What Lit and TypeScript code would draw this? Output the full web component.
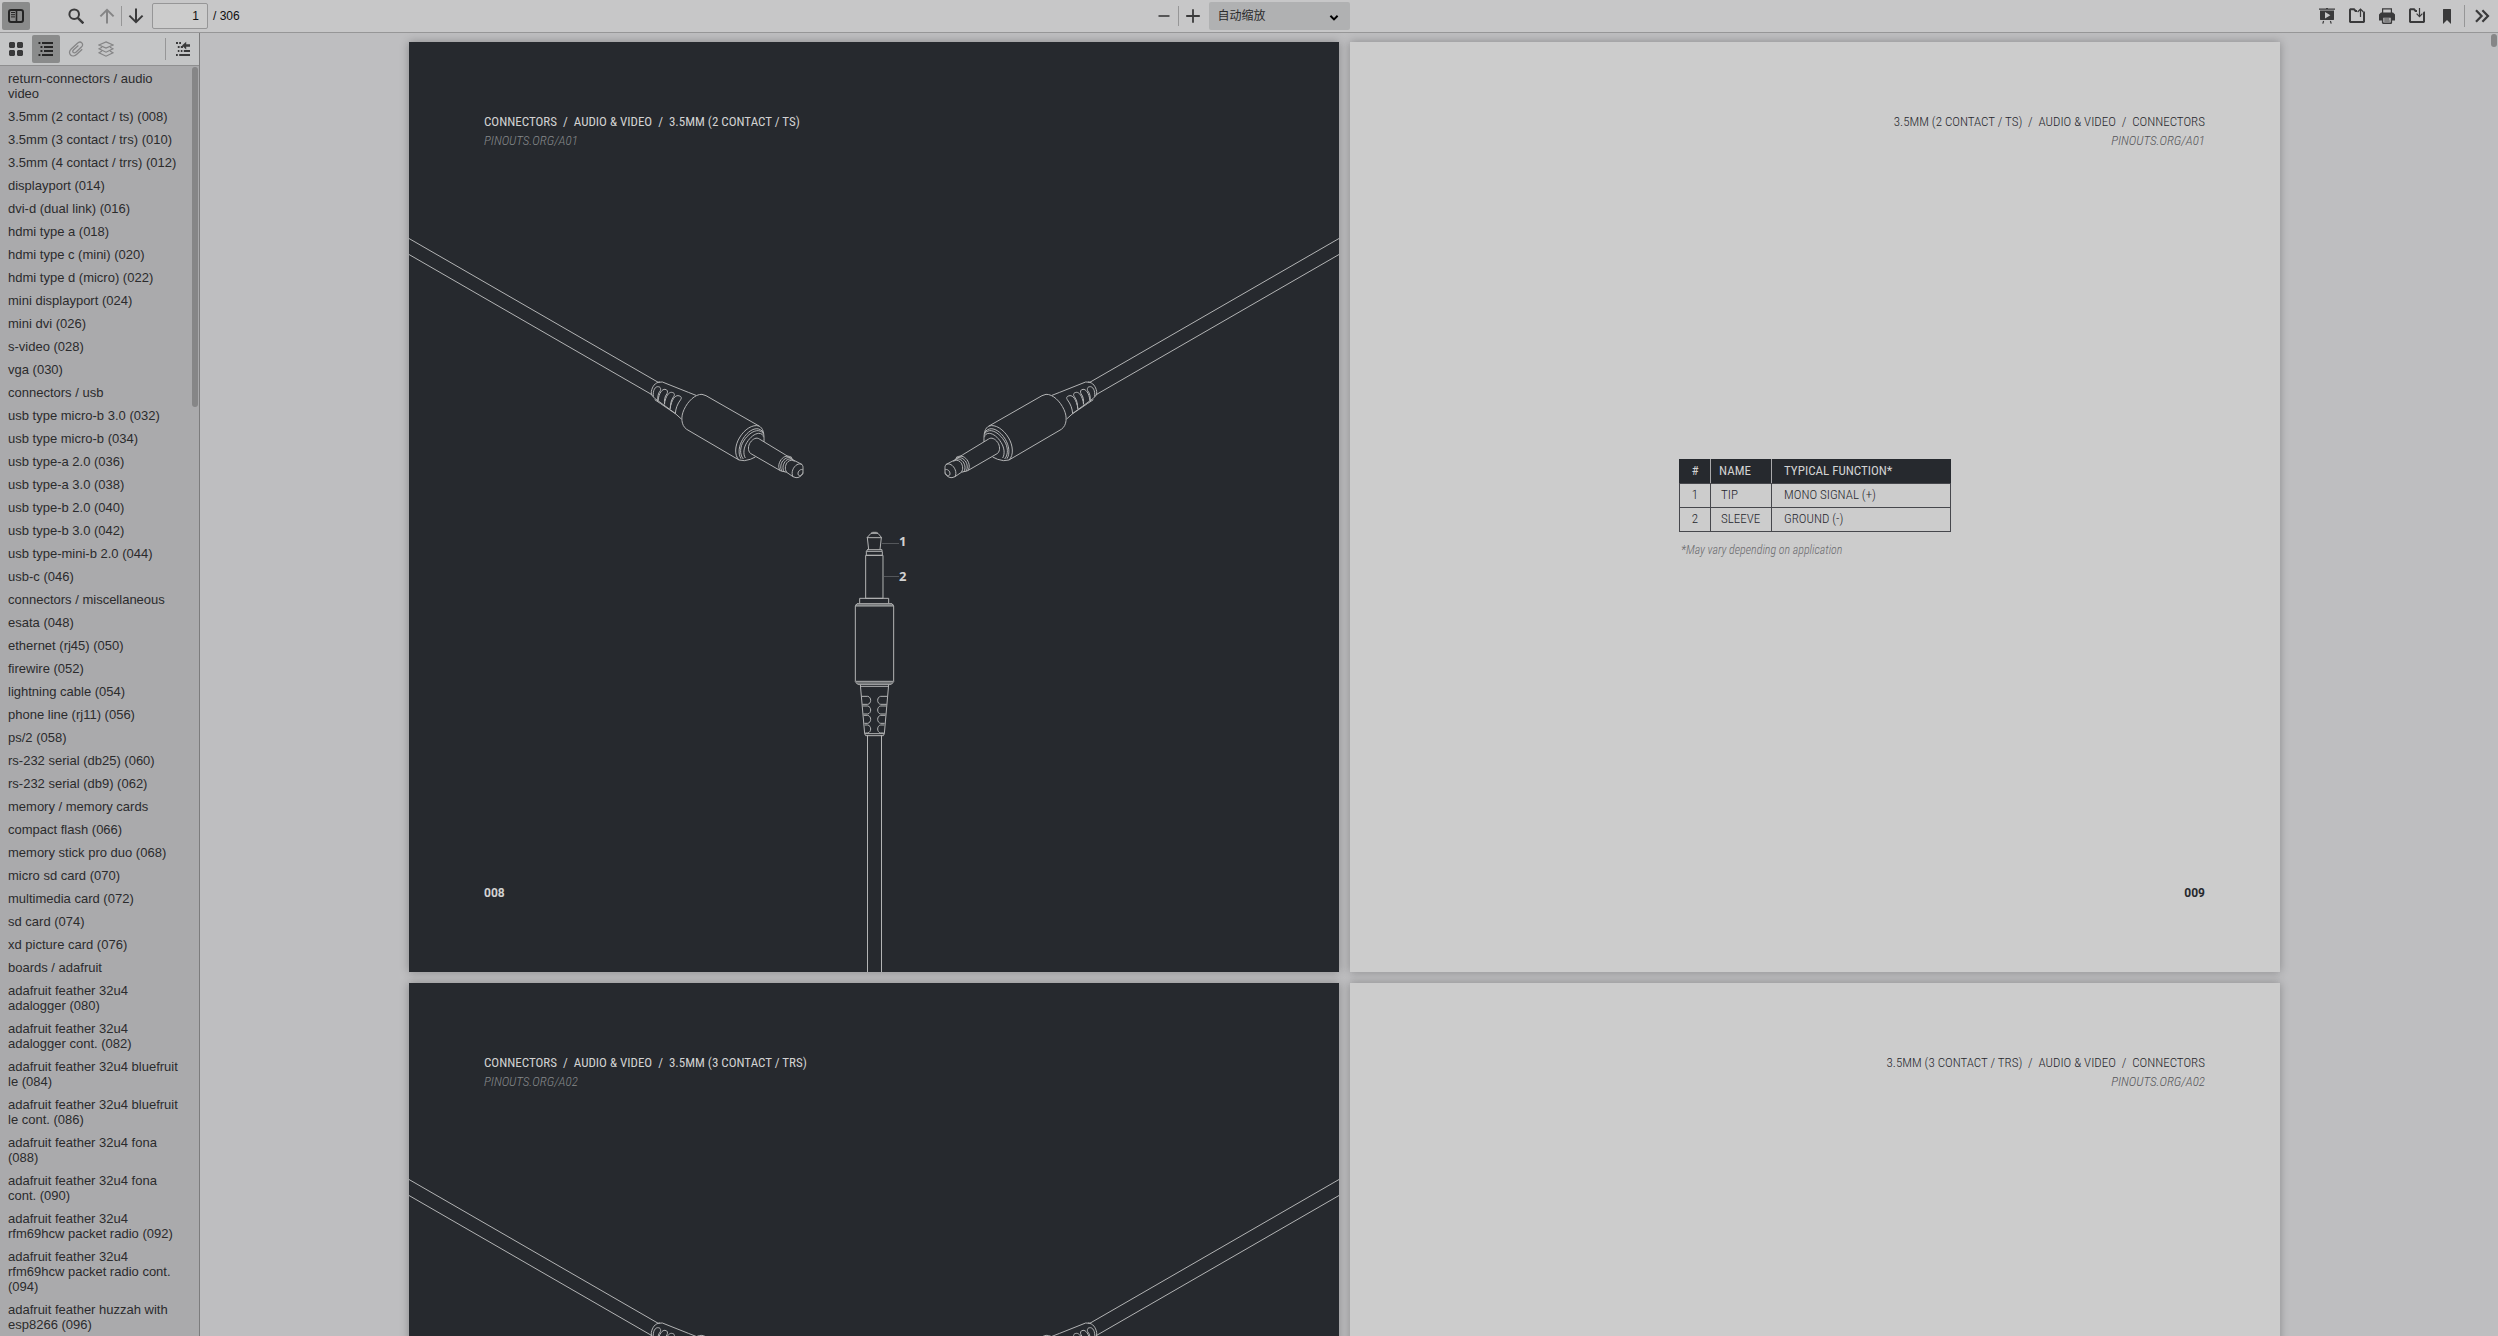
import { LitElement, html, svg, css, type SVGTemplateResult } from "lit";
import { customElement, property } from "lit/decorators.js";
import { classMap } from "lit/directives/class-map.js";

const OUTLINE: string[] = [
  "return-connectors / audio video",
  "3.5mm (2 contact / ts) (008)",
  "3.5mm (3 contact / trs) (010)",
  "3.5mm (4 contact / trrs) (012)",
  "displayport (014)",
  "dvi-d (dual link) (016)",
  "hdmi type a (018)",
  "hdmi type c (mini) (020)",
  "hdmi type d (micro) (022)",
  "mini displayport (024)",
  "mini dvi (026)",
  "s-video (028)",
  "vga (030)",
  "connectors / usb",
  "usb type micro-b 3.0 (032)",
  "usb type micro-b (034)",
  "usb type-a 2.0 (036)",
  "usb type-a 3.0 (038)",
  "usb type-b 2.0 (040)",
  "usb type-b 3.0 (042)",
  "usb type-mini-b 2.0 (044)",
  "usb-c (046)",
  "connectors / miscellaneous",
  "esata (048)",
  "ethernet (rj45) (050)",
  "firewire (052)",
  "lightning cable (054)",
  "phone line (rj11) (056)",
  "ps/2 (058)",
  "rs-232 serial (db25) (060)",
  "rs-232 serial (db9) (062)",
  "memory / memory cards",
  "compact flash (066)",
  "memory stick pro duo (068)",
  "micro sd card (070)",
  "multimedia card (072)",
  "sd card (074)",
  "xd picture card (076)",
  "boards / adafruit",
  "adafruit feather 32u4 adalogger (080)",
  "adafruit feather 32u4 adalogger cont. (082)",
  "adafruit feather 32u4 bluefruit le (084)",
  "adafruit feather 32u4 bluefruit le cont. (086)",
  "adafruit feather 32u4 fona (088)",
  "adafruit feather 32u4 fona cont. (090)",
  "adafruit feather 32u4 rfm69hcw packet radio (092)",
  "adafruit feather 32u4 rfm69hcw packet radio cont. (094)",
  "adafruit feather huzzah with esp8266 (096)",
];

const line = (d: string, width = 2) =>
  svg`<path d=${d} fill="none" stroke="currentColor" stroke-width=${width}></path>`;
const solid = (d: string) => svg`<path d=${d} fill="currentColor" fill-rule="evenodd"></path>`;

const FOLDER = "M8 3H6.5L5 1.2H1.5L1 1.8V13.5L1.5 14H14.5L15 13.5V4.5L14.5 4";

const ICONS: Record<string, SVGTemplateResult> = {
  sidebar: svg`<rect x="1" y="2" width="14" height="12" rx="2" fill="none" stroke="currentColor" stroke-width="2"></rect>
    ${line("M8.5 2V14", 1.6)}${line("M3 4.5H7M3 6.7H7M3 8.9H7", 1)}`,
  search: svg`<circle cx="6.2" cy="6.2" r="4.8" fill="none" stroke="currentColor" stroke-width="2"></circle>
    ${line("M9.8 9.8L15.4 15.4", 2.4)}`,
  up: line("M8 15.5V2M1.4 8.4L8 1.8L14.6 8.4"),
  down: line("M8 .5V14M1.4 7.6L8 14.2L14.6 7.6"),
  minus: line("M2.5 8H13.5", 1.6),
  plus: line("M1.2 8H14.8M8 1.2V14.8", 1.8),
  presentation: svg`${solid("M0 .6H7V0H9V.6H16V1.8H0Z")}
    ${solid("M1 2.4H15V11.6L14.6 12H1.4L1 11.6ZM6 4V10.4L11.4 7.2Z")}${line("M4.6 13L3.8 15.6M11.4 13L12.2 15.6", 1.2)}`,
  open: svg`${line(FOLDER)}${line("M11.5 9V1.4M8.6 4L11.5 1L14.4 4", 1.2)}`,
  print: svg`${line("M3.6 5V.8H12.4V5", 1.2)}
    ${solid("M2 4.6H14L16 6.4V12.6H13V9H3V12.6H0V6.4Z")}
    <rect x="3.6" y="9" width="8.8" height="6.3" rx=".6" fill="none" stroke="currentColor" stroke-width="1.4"></rect>
    ${line("M5.2 11H10.4M5.2 13H10.8", 1)}`,
  download: svg`${line(FOLDER)}${line("M10.5 0V8.2M7.6 5.6L10.5 8.6L13.4 5.6", 1.2)}`,
  bookmark: solid("M4 1.4L4.4 1H11.6L12 1.4V16L8 12L4 16Z"),
  more: line("M2 2.2L7.6 8L2 13.8M8.4 2.2L14 8L8.4 13.8", 2.2),
  thumbs: solid(
    "M2 1H6L7 2V6L6 7H2L1 6V2ZM10 1H14L15 2V6L14 7H10L9 6V2ZM2 9H6L7 10V14L6 15H2L1 14V10ZM10 9H14L15 10V14L14 15H10L9 14V10Z",
  ),
  outline: line("M.5 2H2.4M4 2H15M2.5 6H4.4M6 6H15M2.5 10H4.4M6 10H15M.5 14H2.4M4 14H15", 1.8),
  attach: line(
    "M14.2 8.2L8.8 13.3C6.9 15.1 4.2 15.6 2.6 14C1 12.4 1.2 9.9 3.2 8L9.2 2.4C10.6 1.1 12.6 .7 13.8 1.9C15 3.1 14.8 4.8 13.4 6.1L8.2 11C7.2 11.9 6 12.2 5.2 11.4C4.4 10.6 4.8 9.6 5.6 8.8L10.4 4.4",
    1.3,
  ),
  layers: line(
    "M8 .9L15 4L8 7.1L1 4ZM4 6.2L1 7.8L8 11.2L15 7.8L12 6.2M4 10L1 11.8L8 15.2L15 11.8L12 10",
    1.2,
  ),
  current: svg`${line("M1 2H3M4.2 2H6M2.8 6H4.6M5.8 6H8M2.8 10H4.4M5.8 10H7.4M8.8 10H15M1 14H2.8M4.2 14H15", 1.8)}
    ${solid("M7 4.4L11.2 .8V3.3H15V5.8H11.2V8.4Z")}`,
};

@customElement("viewer-button")
class ViewerButton extends LitElement {
  @property() icon = "";
  @property() label = "";
  @property({ type: Boolean }) pressed = false;
  @property({ type: Boolean }) disabled = false;

  static styles = css`
    :host {
      display: block;
      flex: none;
    }
    .button {
      display: grid;
      place-items: center;
      width: 28px;
      height: 28px;
      padding: 0;
      border: 0;
      border-radius: 2px;
      background: none;
      color: #3a3a3b;
    }
    .pressed {
      background: #8a8b8b;
      color: #242424;
    }
    .button:disabled {
      color: #858586;
    }
    .icon {
      display: block;
      width: 16px;
      height: 16px;
    }
  `;

  render() {
    return html`<button
      type="button"
      class=${classMap({ button: true, pressed: this.pressed })}
      aria-label=${this.label}
      ?disabled=${this.disabled}
    >
      <svg class="icon" viewBox="0 0 16 16" aria-hidden="true">${ICONS[this.icon]}</svg>
    </button>`;
  }
}

/* Angled jack: drawn in a 3x grid, placed at one third of its size. */
const angledJack = svg`
  <path d="M0 196.5L249 340.2M0 212.5L243.5 353"></path>
  <g transform="translate(211 318) scale(.33333)" stroke-width="3">
    <path d="M113 67L127 66L205 97L228 106M94 104V94C97 80 105 67 120 66"></path>
    <path d="M94 104L104 115L164 159L184 177"></path>
    <path d="M100 110C98 90 106 80 113 80C122 80 123 86 121 92C114 100 112 112 114 122"></path>
    <path d="M114 122C117 98 127 87 135 88C143 89 144 95 141 101C134 110 132 121 134 133"></path>
    <path d="M133 133C137 107 147 96 155 97C164 98 165 104 161 110C153 120 151 133 151 146"></path>
    <path d="M150 147C155 117 166 106 174 107C184 108 186 113 182 119C172 132 167 146 166 161L150 150L138 142L122 131L104 119"></path>
    <path d="M357 300L200 208C183 196 182 170 192 149C203 124 226 102 246 103L258 107L417 198"></path>
    <path d="M357 300C342 286 345 256 358 234C373 208 398 192 417 198C429 204 433 218 432 246"></path>
    <path d="M363 296C353 280 357 257 368 238C382 214 403 203 416 207C425 210 430 215 430 222"></path>
    <path d="M370 297C358 283 360 260 371 243C384 222 402 211 415 212C422 213 427 216 429 220"></path>
    <path d="M376 294C368 280 372 261 381 247C391 231 404 221 416 220C424 220 430 224 430 230"></path>
    <path d="M357 300L373 302L391 298L406 291"></path>
    <path d="M391 280C383 272 384 257 391 247C399 236 410 231 418 237L497 285L520 300L547 314"></path>
    <path d="M391 280L481 332L500 337L519 350"></path>
    <path d="M481 332C472 322 477 304 487 295C496 286 508 287 516 293"></path>
    <path d="M487 335C478 324 483 306 492 299C501 291 510 291 518 297"></path>
    <path d="M493 336C485 325 490 309 498 302C505 296 513 295 521 301"></path>
    <path d="M500 337C493 327 496 312 504 305C510 300 517 299 524 304"></path>
    <path d="M519 350C512 338 520 320 531 314C541 309 549 313 549 322V340C545 348 536 354 528 353Z"></path>
    <path d="M548 329C539 326 531 338 535 345C539 350 547 345 548 338"></path>
  </g>`;

const straightJack = svg`
  <path d="M458.5 693V930M472.5 693V930"></path>
  <g transform="translate(411 468) scale(.33333)" stroke-width="3">
    <path d="M141 83L153 70H174L185 83ZM142 83L146 119M184 83L180 119M153 70L158 67H169L174 70"></path>
    <path d="M141 119H186V124H139V136H187V124M143 119L139 124"></path>
    <path d="M137 136H189V265H137Z"></path>
    <path d="M119 280V265H206V280"></path>
    <path d="M106 288L111 281H216L221 288V515L214 523H113L106 515Z"></path>
    <path d="M107 285H220M107 288H220M108 514H219M110 519H217"></path>
    <path d="M121 524L134 671L137 677H190L193 671L206 524M121 529H206M134 671H193"></path>
    ${[571, 600, 628, 657].map(
      (y, i) => svg`
        <path d=${`M${125 + i * 3} ${y - 12}H143C155 ${y - 10} 155 ${y + 10} 143 ${y + 12}H${127 + i * 3}`}></path>
        <path d=${`M${202 - i * 3} ${y - 12}H182C170 ${y - 10} 170 ${y + 10} 182 ${y + 12}H${200 - i * 3}`}></path>`,
    )}
  </g>`;

@customElement("pinout-page")
class PinoutPage extends LitElement {
  @property() heading = "";
  @property() link = "";
  @property() number = "";
  @property({ type: Boolean, reflect: true }) dark = false;
  @property({ type: Boolean }) pinLabels = false;
  @property({ type: Boolean }) pinTable = false;

  static styles = css`
    :host {
      display: block;
      aspect-ratio: 1;
      position: relative;
      box-shadow: 0 0 9px rgba(0, 0, 0, 0.28);
      background: #cccccc;
      color: #26272c;
      font: 300 13px/19px "Roboto Condensed", "Liberation Sans Narrow", Lato, sans-serif;
    }
    :host([dark]) {
      background: #26292e;
      color: #d2d2d2;
      font-weight: 400;
    }
    .sheet {
      box-sizing: border-box;
      height: 100%;
      padding: 70px 75px 69px;
      display: flex;
      flex-direction: column;
      text-align: right;
    }
    :host([dark]) .sheet {
      text-align: left;
    }
    .heading {
      margin: 0;
      font-size: 13px;
      font-weight: inherit;
      white-space: pre;
    }
    .link {
      display: block;
      color: #555558;
      font-style: italic;
      font-weight: 300;
      text-decoration: none;
    }
    :host([dark]) .link {
      color: #87898c;
    }
    .body {
      flex: 1;
      display: flex;
      flex-direction: column;
      align-items: center;
      justify-content: center;
    }
    .block {
      width: 272px;
      text-align: left;
    }
    .footer {
      height: 38px;
      display: flex;
      flex-direction: column;
      justify-content: flex-end;
      font-family: Roboto, sans-serif;
      font-size: 12px;
      font-weight: 700;
      color: #26292e;
    }
    :host([dark]) .footer {
      color: #d2d2d2;
    }
    .figure {
      position: absolute;
      inset: 0;
      width: 100%;
      height: 100%;
      fill: none;
      stroke: #b3b4b5;
      stroke-width: 1;
    }
    .leader {
      stroke: #54575b;
    }
    .pin {
      fill: #d2d2d2;
      stroke: none;
      font: 700 13px "Open Sans", sans-serif;
    }
    .pins {
      width: 100%;
      table-layout: fixed;
      border-collapse: collapse;
      line-height: 16px;
    }
    .pins th,
    .pins td {
      height: 24px;
      box-sizing: border-box;
      padding: 0 0 0 10px;
      border: 1px solid #46474c;
      font-weight: inherit;
    }
    .pins th {
      padding-left: 8px;
      background: #26292e;
      color: #d2d2d2;
      font-weight: 400;
      border-left-color: #a9a9ab;
      border-right-color: #a9a9ab;
      border-top-color: #26292e;
    }
    .pins th:first-child {
      border-left-color: #26292e;
    }
    .pins th:last-child {
      border-right-color: #26292e;
    }
    .pins .index {
      width: 31px;
      padding: 0;
      text-align: center;
    }
    .pins .name {
      width: 61px;
    }
    .pins .use {
      padding-left: 12px;
    }
    .note {
      margin: 11px 0 0 2px;
      font-size: 12px;
      line-height: 14px;
      font-style: italic;
      font-weight: 300;
      color: #6a6a6d;
    }
  `;

  private drawing() {
    return html`<svg class="figure" viewBox="0 0 930 930" role="img" aria-label=${this.heading}>
      ${angledJack}
      <g transform="translate(930 0) scale(-1 1)">${angledJack}</g>
      ${straightJack}
      ${this.pinLabels
        ? svg`<path class="leader" d="M473 501.5H490M475 534.5H490"></path>
          <text class="pin" x="490" y="504">1</text>
          <text class="pin" x="490" y="539">2</text>`
        : null}
    </svg>`;
  }

  private table() {
    return html`<div class="block">
      <table class="pins">
        <thead>
          <tr>
            <th class="index" scope="col">#</th>
            <th class="name" scope="col">NAME</th>
            <th class="use" scope="col">TYPICAL FUNCTION*</th>
          </tr>
        </thead>
        <tbody>
          <tr><td class="index">1</td><td>TIP</td><td class="use">MONO SIGNAL (+)</td></tr>
          <tr><td class="index">2</td><td>SLEEVE</td><td class="use">GROUND (-)</td></tr>
        </tbody>
      </table>
      <p class="note">*May vary depending on application</p>
    </div>`;
  }

  render() {
    return html`${this.dark ? this.drawing() : null}
      <div class="sheet">
        <header>
          <h2 class="heading">${this.heading}</h2>
          <a class="link" href="#">${this.link}</a>
        </header>
        <div class="body">${this.pinTable ? this.table() : null}</div>
        <footer class="footer">${this.number}</footer>
      </div>`;
  }
}

@customElement("app-root")
class AppRoot extends LitElement {
  static styles = css`
    :host {
      display: flex;
      flex-direction: column;
      height: 100vh;
      overflow: hidden;
      background: #bebec0;
      color: #0f0f10;
      font: 12px/16px "Liberation Sans", "Noto Sans CJK SC", sans-serif;
    }
    .toolbar {
      flex: none;
      display: grid;
      grid-template-columns: 1fr auto 1fr;
      align-items: center;
      height: 32px;
      border-bottom: 1px solid #969697;
      background: #c7c7c8;
    }
    .group {
      display: flex;
      align-items: center;
      gap: 1px;
      padding-left: 2px;
    }
    .search {
      margin: 0 2px 0 31px;
    }
    .rule {
      width: 1px;
      height: 20px;
      background: #969697;
    }
    .tall {
      height: 22px;
      margin: 0 1px;
    }
    .steps,
    .zoom {
      display: flex;
      align-items: center;
    }
    .zoom {
      padding-left: 1px;
    }
    .number {
      box-sizing: border-box;
      width: 56px;
      height: 26px;
      margin: 0 4px 0 1px;
      padding: 0 8px;
      border: 1px solid #969697;
      border-radius: 2px;
      background: #cccccc;
      color: inherit;
      font: inherit;
      text-align: right;
    }
    .scale {
      position: relative;
      margin-left: 2px;
    }
    .select {
      appearance: none;
      width: 141px;
      height: 28px;
      padding: 0 24px 0 9px;
      border: 0;
      border-radius: 2px;
      background: #b0b1b2;
      color: #2c2c2d;
      font: inherit;
      display: block;
    }
    .caret {
      position: absolute;
      right: 11px;
      top: 12px;
      width: 10px;
      height: 8px;
      pointer-events: none;
    }
    .tools {
      justify-content: flex-end;
      gap: 2px;
      padding-right: 2px;
    }
    .main {
      flex: 1;
      min-height: 0;
      display: flex;
    }
    .sidebar {
      flex: none;
      width: 199px;
      display: flex;
      flex-direction: column;
      border-right: 1px solid #7c7c7d;
      background: #aaaaac;
    }
    .views {
      flex: none;
      display: flex;
      align-items: center;
      gap: 2px;
      height: 32px;
      padding: 0 2px;
      border-bottom: 1px solid #8e8e8f;
      background: #c4c5c6;
    }
    .gap {
      flex: 1;
    }
    .scroll {
      flex: 1;
      min-height: 0;
      display: flex;
      overflow: hidden;
    }
    .tree {
      flex: 1;
      margin: 0;
      padding: 3px 4px 0;
      list-style: none;
    }
    .item {
      display: block;
      margin-bottom: 1px;
      padding: 2px 0 5px 4px;
      color: #2b2b2c;
      font-size: 13px;
      line-height: 15px;
      text-decoration: none;
    }
    .track {
      flex: none;
      width: 6px;
      padding: 1px 1px 0 2px;
    }
    .thumb {
      height: 340px;
      border-radius: 3px;
      background: #868687;
    }
    .short {
      height: 13px;
    }
    .viewer {
      flex: 1;
      min-width: 0;
      display: flex;
      overflow: hidden;
    }
    .pages {
      flex: 1;
      display: grid;
      grid-template-columns: 1fr 1fr;
      align-content: start;
      gap: 11px;
      padding: 9px 209px 0;
    }
  `;

  render() {
    return html`
      <header class="toolbar">
        <div class="group">
          <viewer-button icon="sidebar" label="切换侧栏" pressed></viewer-button>
          <viewer-button class="search" icon="search" label="查找"></viewer-button>
          <div class="steps">
            <viewer-button icon="up" label="上一页" disabled></viewer-button>
            <span class="rule"></span>
            <viewer-button icon="down" label="下一页"></viewer-button>
          </div>
          <input class="number" type="text" aria-label="页面" .value=${"1"} />
          <span>/ 306</span>
        </div>
        <div class="zoom">
          <viewer-button icon="minus" label="缩小"></viewer-button>
          <span class="rule"></span>
          <viewer-button icon="plus" label="放大"></viewer-button>
          <div class="scale">
            <select class="select" aria-label="缩放">
              <option>自动缩放</option>
            </select>
            <svg class="caret" viewBox="0 0 10 8" aria-hidden="true">
              <path d="M1.4 1.8L5 5.4L8.6 1.8" fill="none" stroke="#000" stroke-width="2"></path>
            </svg>
          </div>
        </div>
        <div class="group tools">
          <viewer-button icon="presentation" label="演示模式"></viewer-button>
          <viewer-button icon="open" label="打开"></viewer-button>
          <viewer-button icon="print" label="打印"></viewer-button>
          <viewer-button icon="download" label="下载"></viewer-button>
          <viewer-button icon="bookmark" label="当前视图"></viewer-button>
          <span class="rule tall"></span>
          <viewer-button icon="more" label="工具"></viewer-button>
        </div>
      </header>
      <div class="main">
        <aside class="sidebar">
          <div class="views">
            <viewer-button icon="thumbs" label="缩略图"></viewer-button>
            <viewer-button icon="outline" label="文档大纲" pressed></viewer-button>
            <viewer-button icon="attach" label="附件" disabled></viewer-button>
            <viewer-button icon="layers" label="图层" disabled></viewer-button>
            <span class="gap"></span>
            <span class="rule tall"></span>
            <viewer-button icon="current" label="查找当前大纲项目"></viewer-button>
          </div>
          <div class="scroll">
            <ul class="tree">
              ${OUTLINE.map((text) => html`<li><a class="item" href="#">${text}</a></li>`)}
            </ul>
            <div class="track"><div class="thumb"></div></div>
          </div>
        </aside>
        <main class="viewer">
          <div class="pages">
            <pinout-page dark .pinLabels=${true} heading="CONNECTORS  /  AUDIO & VIDEO  /  3.5MM (2 CONTACT / TS)" link="PINOUTS.ORG/A01" number="008"></pinout-page>
            <pinout-page .pinTable=${true} heading="3.5MM (2 CONTACT / TS)  /  AUDIO & VIDEO  /  CONNECTORS" link="PINOUTS.ORG/A01" number="009"></pinout-page>
            <pinout-page dark heading="CONNECTORS  /  AUDIO & VIDEO  /  3.5MM (3 CONTACT / TRS)" link="PINOUTS.ORG/A02"></pinout-page>
            <pinout-page heading="3.5MM (3 CONTACT / TRS)  /  AUDIO & VIDEO  /  CONNECTORS" link="PINOUTS.ORG/A02"></pinout-page>
          </div>
          <div class="track"><div class="thumb short"></div></div>
        </main>
      </div>
    `;
  }
}
